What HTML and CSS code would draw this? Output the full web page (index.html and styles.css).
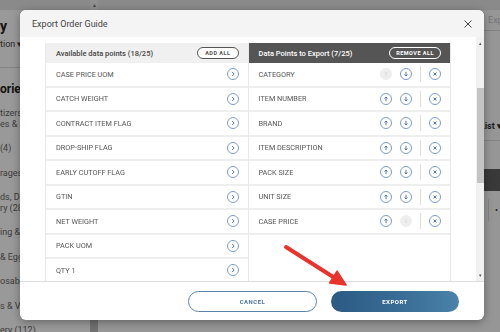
FILE: index.html
```html
<!DOCTYPE html>
<html lang="en">
<head>
    <meta charset="UTF-8">
    <meta name="viewport" content="width=device-width, initial-scale=1.0">
    <title>Export Order Guide</title>
    <link rel="stylesheet" href="styles.css">
</head>
<body>
    <div class="page">
        <aside class="sidebar">
            <div class="top-strip"></div>
            <div class="side-title">y</div>
            <div class="side-sub">tion ▾</div>
            <div class="side-heading">ories</div>
            <ul class="side-list">
                <li>tizers,<br>es &amp; S</li>
                <li>(4)</li>
                <li>rages</li>
                <li>ds, De<br>ry (28)</li>
                <li>ing &amp;</li>
                <li>&amp; Egg</li>
                <li>osable</li>
                <li>s &amp; Ve</li>
                <li>ery (112)</li>
            </ul>
        </aside>
        <div class="side-scroll">
            <span class="side-scroll-up">▴</span>
            <span class="side-scroll-thumb"></span>
        </div>
        <main class="main">
            <div class="top-strip"></div>
            <div class="main-top"><span class="ghost-btn">Export</span></div>
            <div class="main-filter"><span class="filter-label">List ▾</span></div>
            <div class="main-band"></div>
            <div class="main-row"><span class="main-cell"></span><span class="dot">•</span></div>
        </main>
    </div>

    <div class="backdrop"></div>

    <div class="modal">
        <div class="modal-header">
            <span class="modal-title">Export Order Guide</span>
            <svg class="close-icon" width="8" height="8" viewBox="0 0 8 8"><path d="M0.5 0.5 L7.5 7.5 M7.5 0.5 L0.5 7.5" stroke="#444" stroke-width="1"/></svg>
        </div>

        <div class="modal-body">
            <div class="lists-wrap">
                <div class="lists">
                    <section class="panel">
                        <div class="panel-head">
                            <span>Available data points (18/25)</span>
                            <span class="pill pill-dark">ADD ALL</span>
                        </div>
                        <div class="row"><span>CASE PRICE UOM</span><span class="icon"><svg viewBox="0 0 10 10"><path d="M4.2 3 L6.1 5 L4.2 7"/></svg></span></div>
                        <div class="row"><span>CATCH WEIGHT</span><span class="icon"><svg viewBox="0 0 10 10"><path d="M4.2 3 L6.1 5 L4.2 7"/></svg></span></div>
                        <div class="row"><span>CONTRACT ITEM FLAG</span><span class="icon"><svg viewBox="0 0 10 10"><path d="M4.2 3 L6.1 5 L4.2 7"/></svg></span></div>
                        <div class="row"><span>DROP-SHIP FLAG</span><span class="icon"><svg viewBox="0 0 10 10"><path d="M4.2 3 L6.1 5 L4.2 7"/></svg></span></div>
                        <div class="row"><span>EARLY CUTOFF FLAG</span><span class="icon"><svg viewBox="0 0 10 10"><path d="M4.2 3 L6.1 5 L4.2 7"/></svg></span></div>
                        <div class="row"><span>GTIN</span><span class="icon"><svg viewBox="0 0 10 10"><path d="M4.2 3 L6.1 5 L4.2 7"/></svg></span></div>
                        <div class="row"><span>NET WEIGHT</span><span class="icon"><svg viewBox="0 0 10 10"><path d="M4.2 3 L6.1 5 L4.2 7"/></svg></span></div>
                        <div class="row"><span>PACK UOM</span><span class="icon"><svg viewBox="0 0 10 10"><path d="M4.2 3 L6.1 5 L4.2 7"/></svg></span></div>
                        <div class="row"><span>QTY 1</span><span class="icon"><svg viewBox="0 0 10 10"><path d="M4.2 3 L6.1 5 L4.2 7"/></svg></span></div>
                        <div class="row"><span>QTY 2</span><span class="icon"><svg viewBox="0 0 10 10"><path d="M4.2 3 L6.1 5 L4.2 7"/></svg></span></div>
                    </section>

                    <section class="panel">
                        <div class="panel-head panel-head-dark">
                            <span>Data Points to Export (7/25)</span>
                            <span class="pill pill-light">REMOVE ALL</span>
                        </div>
                        <div class="row">
                            <span>CATEGORY</span>
                            <span class="actions">
                                <span class="icon icon-off"><svg viewBox="0 0 10 10"><path d="M5 7.2 V3 M3.5 4.5 L5 3 L6.5 4.5"/></svg></span>
                                <span class="icon"><svg viewBox="0 0 10 10"><path d="M5 2.8 V7 M3.5 5.5 L5 7 L6.5 5.5"/></svg></span>
                                <span class="divider"></span>
                                <span class="icon"><svg viewBox="0 0 10 10"><path d="M3.5 3.5 L6.5 6.5 M6.5 3.5 L3.5 6.5"/></svg></span>
                            </span>
                        </div>
                        <div class="row">
                            <span>ITEM NUMBER</span>
                            <span class="actions">
                                <span class="icon"><svg viewBox="0 0 10 10"><path d="M5 7.2 V3 M3.5 4.5 L5 3 L6.5 4.5"/></svg></span>
                                <span class="icon"><svg viewBox="0 0 10 10"><path d="M5 2.8 V7 M3.5 5.5 L5 7 L6.5 5.5"/></svg></span>
                                <span class="divider"></span>
                                <span class="icon"><svg viewBox="0 0 10 10"><path d="M3.5 3.5 L6.5 6.5 M6.5 3.5 L3.5 6.5"/></svg></span>
                            </span>
                        </div>
                        <div class="row">
                            <span>BRAND</span>
                            <span class="actions">
                                <span class="icon"><svg viewBox="0 0 10 10"><path d="M5 7.2 V3 M3.5 4.5 L5 3 L6.5 4.5"/></svg></span>
                                <span class="icon"><svg viewBox="0 0 10 10"><path d="M5 2.8 V7 M3.5 5.5 L5 7 L6.5 5.5"/></svg></span>
                                <span class="divider"></span>
                                <span class="icon"><svg viewBox="0 0 10 10"><path d="M3.5 3.5 L6.5 6.5 M6.5 3.5 L3.5 6.5"/></svg></span>
                            </span>
                        </div>
                        <div class="row">
                            <span>ITEM DESCRIPTION</span>
                            <span class="actions">
                                <span class="icon"><svg viewBox="0 0 10 10"><path d="M5 7.2 V3 M3.5 4.5 L5 3 L6.5 4.5"/></svg></span>
                                <span class="icon"><svg viewBox="0 0 10 10"><path d="M5 2.8 V7 M3.5 5.5 L5 7 L6.5 5.5"/></svg></span>
                                <span class="divider"></span>
                                <span class="icon"><svg viewBox="0 0 10 10"><path d="M3.5 3.5 L6.5 6.5 M6.5 3.5 L3.5 6.5"/></svg></span>
                            </span>
                        </div>
                        <div class="row">
                            <span>PACK SIZE</span>
                            <span class="actions">
                                <span class="icon"><svg viewBox="0 0 10 10"><path d="M5 7.2 V3 M3.5 4.5 L5 3 L6.5 4.5"/></svg></span>
                                <span class="icon"><svg viewBox="0 0 10 10"><path d="M5 2.8 V7 M3.5 5.5 L5 7 L6.5 5.5"/></svg></span>
                                <span class="divider"></span>
                                <span class="icon"><svg viewBox="0 0 10 10"><path d="M3.5 3.5 L6.5 6.5 M6.5 3.5 L3.5 6.5"/></svg></span>
                            </span>
                        </div>
                        <div class="row">
                            <span>UNIT SIZE</span>
                            <span class="actions">
                                <span class="icon"><svg viewBox="0 0 10 10"><path d="M5 7.2 V3 M3.5 4.5 L5 3 L6.5 4.5"/></svg></span>
                                <span class="icon"><svg viewBox="0 0 10 10"><path d="M5 2.8 V7 M3.5 5.5 L5 7 L6.5 5.5"/></svg></span>
                                <span class="divider"></span>
                                <span class="icon"><svg viewBox="0 0 10 10"><path d="M3.5 3.5 L6.5 6.5 M6.5 3.5 L3.5 6.5"/></svg></span>
                            </span>
                        </div>
                        <div class="row">
                            <span>CASE PRICE</span>
                            <span class="actions">
                                <span class="icon"><svg viewBox="0 0 10 10"><path d="M5 7.2 V3 M3.5 4.5 L5 3 L6.5 4.5"/></svg></span>
                                <span class="icon icon-off"><svg viewBox="0 0 10 10"><path d="M5 2.8 V7 M3.5 5.5 L5 7 L6.5 5.5"/></svg></span>
                                <span class="divider"></span>
                                <span class="icon"><svg viewBox="0 0 10 10"><path d="M3.5 3.5 L6.5 6.5 M6.5 3.5 L3.5 6.5"/></svg></span>
                            </span>
                        </div>
                    </section>
                </div>
            </div>
            <div class="scrollbar">
                <span class="scroll-arrow">▴</span>
                <span class="scroll-track"><span class="scroll-thumb"></span></span>
                <span class="scroll-arrow">▾</span>
            </div>
        </div>

        <div class="modal-footer">
            <button class="btn btn-outline">CANCEL</button>
            <button class="btn btn-primary">EXPORT</button>
        </div>
    </div>

    <!-- annotation arrow pointing at the export button -->
    <svg class="callout" width="500" height="332" viewBox="0 0 500 332">
        <line x1="286" y1="247" x2="334" y2="277.5" stroke="#e8342c" stroke-width="4" stroke-linecap="round"/>
        <polygon points="346,285 329.6,282.9 337.1,271.1" fill="#e8342c" stroke="#e8342c" stroke-width="1.5" stroke-linejoin="round"/>
    </svg>
</body>
</html>
```

FILE: styles.css
```css
* {
    margin: 0;
    padding: 0;
    box-sizing: border-box;
}

body {
    width: 500px;
    height: 332px;
    overflow: hidden;
    font-family: Roboto, 'Liberation Sans', sans-serif;
    background: #fff;
    position: relative;
}

/* Page behind the dialog */
.page {
    display: flex;
    height: 332px;
    overflow: hidden;
}

.top-strip {
    height: 10px;
    background: #e6e6e6;
}

.sidebar {
    width: 90px;
    flex-shrink: 0;
    background: #fff;
    color: #666;
}

.side-title {
    margin-top: 8px;
    font-size: 14px;
    font-weight: 700;
    line-height: 16px;
    color: #222;
}

.side-sub {
    margin-top: 5px;
    font-size: 9px;
    line-height: 10px;
    padding-bottom: 18px;
    border-bottom: 1px solid #ddd;
    color: #444;
}

.side-heading {
    margin-top: 14px;
    font-size: 12px;
    font-weight: 700;
    line-height: 14px;
    color: #222;
}

.side-list {
    list-style: none;
    margin-top: 12px;
    font-size: 9px;
    line-height: 10.5px;
}

.side-list li {
    margin-bottom: 14px;
}

.side-scroll {
    width: 8px;
    flex-shrink: 0;
    background: #f1f1f1;
    display: flex;
    flex-direction: column;
    justify-content: space-between;
    align-items: center;
}

.side-scroll-up {
    font-size: 6px;
    line-height: 10px;
    color: #777;
}

.side-scroll-thumb {
    width: 8px;
    height: 14px;
    background: #bdbdbd;
}

.main {
    flex: 1;
    display: flex;
    flex-direction: column;
    background: #fafafa;
    overflow: hidden;
}

.main-top {
    height: 21px;
    border-bottom: 1px solid #ddd;
    display: flex;
    justify-content: flex-end;
    align-items: center;
    font-size: 9px;
    color: #c4c4c4;
}

.ghost-btn {
    margin-right: -14px;
}

.main-filter {
    height: 110px;
    border-bottom: 1px solid #ddd;
    display: flex;
    justify-content: flex-end;
    align-items: flex-end;
    padding-bottom: 9px;
}

.filter-label {
    font-size: 9px;
    font-weight: 700;
    color: #333;
    margin-right: -2px;
}

.main-band {
    margin-top: 28px;
    height: 22px;
    background: #606060;
}

.main-row {
    display: flex;
    justify-content: flex-end;
    align-items: center;
    gap: 6px;
    height: 38px;
    padding-right: 2px;
}

.main-cell {
    width: 1px;
    height: 22px;
    background: #ddd;
}

.dot {
    font-size: 9px;
    color: #333;
}

.backdrop {
    position: fixed;
    inset: 0;
    background: rgba(0, 0, 0, 0.4);
}

/* Dialog */
.modal {
    position: absolute;
    left: 20px;
    top: 10px;
    width: 464px;
    height: 310px;
    background: #fff;
    border-radius: 6px;
    box-shadow: 0 2px 8px rgba(0, 0, 0, 0.35);
    display: flex;
    flex-direction: column;
    overflow: hidden;
}

.modal-header {
    height: 27px;
    flex-shrink: 0;
    background: #f4f4f4;
    display: flex;
    justify-content: space-between;
    align-items: center;
    padding: 0 12px;
}

.modal-title {
    font-size: 9px;
    color: #444;
}

.close-icon {
    display: block;
}

.modal-body {
    flex: 1;
    display: flex;
    min-height: 0;
    border-bottom: 1px solid #ddd;
}

.lists-wrap {
    flex: 1;
    overflow: hidden;
    padding: 6px 25px 0 25px;
}

.lists {
    display: grid;
    grid-template-columns: 1fr 1fr;
    gap: 1px;
    background: #e8e8e8;
    border-left: 1px solid #e8e8e8;
    border-right: 1px solid #e8e8e8;
    min-height: 300px;
}

.panel {
    background: #fff;
}

.panel-head {
    height: 20px;
    display: flex;
    justify-content: space-between;
    align-items: center;
    padding: 0 9px 0 10px;
    background: #f0f0f0;
    color: #444;
    font-size: 7.5px;
    font-weight: 500;
}

.panel-head-dark {
    background: #555;
    color: #fff;
}

.pill {
    border-radius: 7px;
    font-size: 5.5px;
    font-weight: 700;
    letter-spacing: 0.5px;
    line-height: 10px;
    padding: 0 7px;
}

.pill-dark {
    border: 1px solid #555;
    color: #555;
    background: #fff;
}

.pill-light {
    border: 1px solid #fff;
    color: #fff;
    padding: 0 6px;
}

.row {
    height: 24.5px;
    border-bottom: 2px solid #eeeeee;
    display: flex;
    justify-content: space-between;
    align-items: center;
    padding: 0 9px 0 10px;
    font-size: 7.3px;
    color: #555;
}

.actions {
    display: flex;
    align-items: center;
    gap: 8px;
}

.icon {
    width: 12px;
    height: 12px;
    border: 1px solid #7b9cc5;
    border-radius: 50%;
    display: flex;
    align-items: center;
    justify-content: center;
}

.icon svg {
    width: 10px;
    height: 10px;
    fill: none;
    stroke: #4f77aa;
    stroke-width: 1;
}

.icon-off {
    background: #eeeeee;
    border-color: #eeeeee;
}

.icon-off svg {
    stroke: #dcdcdc;
}

.divider {
    width: 1px;
    height: 16px;
    background: #ddd;
}

.scrollbar {
    width: 8px;
    display: flex;
    flex-direction: column;
    align-items: center;
    background: #f1f1f1;
}

.scroll-arrow {
    font-size: 5px;
    line-height: 12px;
    color: #555;
}

.scroll-track {
    flex: 1;
    width: 8px;
    padding-top: 39px;
}

.scroll-thumb {
    display: block;
    width: 7px;
    margin: 0 auto;
    height: 95px;
    background: #c4c4c4;
}

.modal-footer {
    height: 38px;
    flex-shrink: 0;
    display: flex;
    justify-content: flex-end;
    align-items: center;
    gap: 14px;
    padding-right: 25px;
}

.btn {
    height: 21px;
    border-radius: 11px;
    font-family: Roboto, 'Liberation Sans', sans-serif;
    font-size: 6px;
    font-weight: 700;
    letter-spacing: 0.5px;
}

.btn-outline {
    width: 129px;
    background: #fff;
    border: 1px solid #5a82aa;
    color: #4f7499;
}

.btn-primary {
    width: 128px;
    border: none;
    color: #fff;
    background: linear-gradient(90deg, #2b5a85 0%, #3b6f98 60%, #4a82aa 100%);
}

.callout {
    position: absolute;
    left: 0;
    top: 0;
    pointer-events: none;
}
```
